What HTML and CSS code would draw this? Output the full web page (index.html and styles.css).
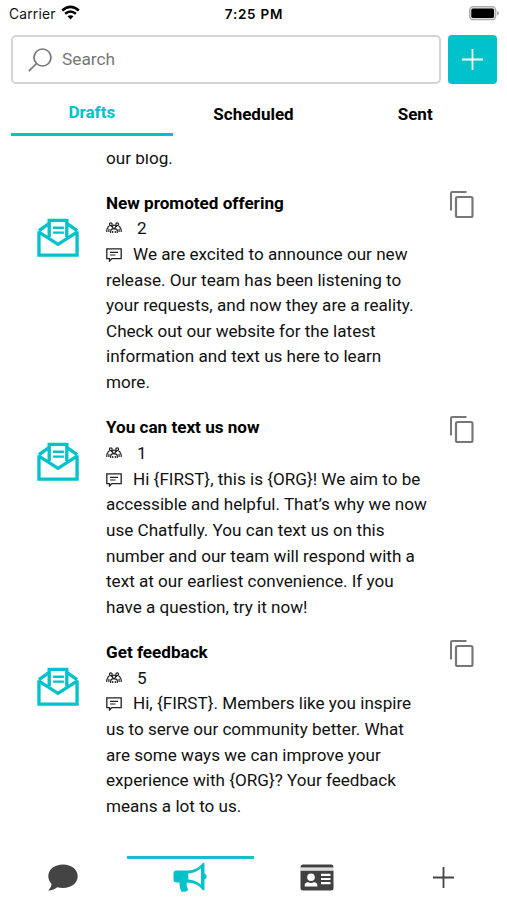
FILE: index.html
```
<!DOCTYPE html>
<html lang="en">
<head>
<meta charset="utf-8">
<title>Drafts</title>
<link rel="stylesheet" href="styles.css">
</head>
<body>
<svg class="defs" aria-hidden="true">
  <symbol id="mail" viewBox="0 0 44 40">
    <path d="M2 13v24.500h39V13M2 14l19.500 12.500L41 14M12.500 5 2 12.500M30.500 5 41 12.500M12.500 19V2h18v17" fill="none" stroke="currentColor" stroke-width="3.400"/>
    <path d="M16.500 9.500h11M16.500 14.500h11" stroke="currentColor" stroke-width="2.500"/>
  </symbol>
  <symbol id="people" viewBox="0 0 16 12">
    <g fill="none" stroke="currentColor" stroke-width="1.200">
      <circle cx="8" cy="4.800" r="1.600"/><circle cx="4.800" cy="2.200" r="1.400"/><circle cx="11.200" cy="2.200" r="1.400"/>
      <path d="M4.700 11V9q0-2.200 2-2.200h2.600q2 0 2 2.200v2M.8 10V8q0-1.400 1-1.800 0-2.200 1.800-2.200M15.200 10V8q0-1.400-1-1.800 0-2.200-1.800-2.200M2.900 7v3M13.100 7v3M6.700 11V9M9.300 11V9M5 4.200l1.200.6M11 4.200l-1.200.6"/>
    </g>
  </symbol>
  <symbol id="message" viewBox="0 0 16 14">
    <path d="M.8.800h14.400v9.800H6L3.500 13v-2.400H.8z" fill="none" stroke="currentColor" stroke-width="1.300"/>
    <path d="M4 4.400h8M4 7h5.500" stroke="currentColor" stroke-width="1.100"/>
  </symbol>
  <symbol id="copy" viewBox="0 0 24 28">
    <path d="M1 19.500V2.200Q1 1 2.200 1H16.500" fill="none" stroke="currentColor" stroke-width="2"/>
    <rect x="6" y="6" width="16.500" height="20" rx="1.500" fill="none" stroke="currentColor" stroke-width="2.200"/>
  </symbol>
</svg>

<div class="phone">
  <header class="status">
    <div class="carrier">Carrier
      <svg width="19" height="15" viewBox="0 0 19 15"><g fill="none" stroke="#000" stroke-width="2.500"><path d="M1.200 5.500q8.300-7.300 16.600 0"/><path d="M4.100 8.700q5.400-4.500 10.800 0"/></g><path d="M6.500 11.300q3-2.200 6 0l-3 3.100z"/></svg>
    </div>
    <div class="time">7:25 PM</div>
    <div class="battery">
      <svg width="31" height="15" viewBox="0 0 31 15"><rect x=".7" y=".7" width="26" height="13" rx="3.500" fill="#ddd" stroke="#aaa" stroke-width="1.300"/><rect x="2.300" y="2.400" width="22.700" height="9.600" rx="1.700"/><path d="M28 4.800q4 2.400 0 4.800z" fill="#aaa"/></svg>
    </div>
  </header>

  <div class="search-row">
    <div class="search">
      <svg width="24" height="24" viewBox="0 0 24 24" fill="none" stroke="#777" stroke-width="1.700"><circle cx="14.500" cy="9.500" r="8.500"/><path d="M8.500 15.500.8 23.200"/></svg>
      <span>Search</span>
    </div>
    <div class="add"><svg width="21" height="21" viewBox="0 0 21 21"><path d="M10.500 0v21M0 10.500h21" stroke="#fff" stroke-width="1.800"/></svg></div>
  </div>

  <nav class="tabs">
    <div class="tab active">Drafts</div>
    <div class="tab">Scheduled</div>
    <div class="tab">Sent</div>
  </nav>

  <main class="list">
    <article class="draft partial"><div class="body">our blog.</div></article>

    <article class="draft">
      <svg class="mail"><use href="#mail"/></svg>
      <div class="body">
        <h2>New promoted offering</h2>
        <div><svg class="people"><use href="#people"/></svg>2</div>
        <p><svg class="message"><use href="#message"/></svg>We are excited to announce our new<br>release. Our team has been listening to<br>your requests, and now they are a reality.<br>Check out our website for the latest<br>information and text us here to learn<br>more.</p>
      </div>
      <svg class="copy"><use href="#copy"/></svg>
    </article>

    <article class="draft">
      <svg class="mail"><use href="#mail"/></svg>
      <div class="body">
        <h2>You can text us now</h2>
        <div><svg class="people"><use href="#people"/></svg>1</div>
        <p><svg class="message"><use href="#message"/></svg>Hi {FIRST}, this is {ORG}! We aim to be<br>accessible and helpful. That’s why we now<br>use Chatfully. You can text us on this<br>number and our team will respond with a<br>text at our earliest convenience. If you<br>have a question, try it now!</p>
      </div>
      <svg class="copy"><use href="#copy"/></svg>
    </article>

    <article class="draft">
      <svg class="mail"><use href="#mail"/></svg>
      <div class="body">
        <h2>Get feedback</h2>
        <div><svg class="people"><use href="#people"/></svg>5</div>
        <p><svg class="message"><use href="#message"/></svg>Hi, {FIRST}. Members like you inspire<br>us to serve our community better. What<br>are some ways we can improve your<br>experience with {ORG}? Your feedback<br>means a lot to us.</p>
      </div>
      <svg class="copy"><use href="#copy"/></svg>
    </article>
  </main>

  <footer class="bottom">
    <div class="item"><svg width="30" height="27" viewBox="0 0 30 27"><path d="M15 .5C23.500.5 29.700 5.500 29.700 12.300S23.500 24 15 24q-3 0-5.800-.8Q6 26.300.3 26.500 3.400 23.500 3.600 20 .3 16.600.3 12.300C.3 5.500 6.500.500 15 .5z" fill="#444"/></svg></div>
    <div class="item active"><svg width="34" height="31" viewBox="0 0 34 31"><path d="M3.500 8.500H15C21 8.500 26 5.500 29.500 1.300q2-1.500 2 .7v9.500q2.200 1 2.200 3t-2.200 3v9.600q0 2.200-2 .7C26 23.500 21 20.500 14 20.500q-1 2.200.2 4.500.3 1.500 1 2.500-.8 2.300-3.500 2.300H8.500Q6.300 25.500 6.400 20.500H3.500Q.5 20.500.5 17.500v-6q0-3 3-3z" fill="#00c2cb"/><path d="M15.300 11.400Q22.500 11 28 6.300v16.400Q22.500 18 15.300 17.600z" fill="#fff"/></svg></div>
    <div class="item"><svg width="34" height="27" viewBox="0 0 34 27"><path d="M3 .5h28q2.500 0 2.500 3H.5q0-3 2.500-3zM.5 6.500h33V24q0 2.500-2.500 2.500H3Q.5 26.500.5 24z" fill="#404040"/><path d="M.5 4h33v2.500H.5z" fill="#ddd"/><circle cx="11" cy="13.300" r="3.800" fill="#fff"/><path d="M4.500 22.500q0-4.300 3.500-4.300 3 1.500 6 0 3.500 0 3.500 4.300zM21 9.700h9.500v2.200H21zM21 13.900h9.500v2.200H21zM21 18h9.500v2.200H21z" fill="#fff"/></svg></div>
    <div class="item"><svg width="21" height="21" viewBox="0 0 21 21"><path d="M10.500 0v21M0 10.500h21" stroke="#444" stroke-width="1.800"/></svg></div>
  </footer>
</div>
</body>
</html>
```

FILE: styles.css
```
* { box-sizing: border-box; }
body { margin: 0; background: #fff; color: #111; font-family: Roboto, sans-serif; }
svg { display: block; }
.defs { display: none; }
.phone { width: 507px; height: 900px; display: flex; flex-direction: column; overflow: hidden; }

.status { flex: none; height: 35px; padding: 5px 7px 0 9px; display: grid; grid-template-columns: 1fr auto 1fr; font: 500 13.500px/18px Inter, sans-serif; color: #111; }
.carrier { display: flex; gap: 5px; font-weight: 400; font-size: 13.800px; letter-spacing: .2px; }
.time { font-weight: 600; letter-spacing: .75px; margin-left: -1px; color: #000; }
.battery { justify-self: end; padding-top: 1px; }

.search-row { flex: none; display: flex; gap: 7px; padding: 0 10px 0 11px; height: 49px; }
.search { flex: 1; display: flex; align-items: center; gap: 10px; padding-left: 15px; border: 2px solid #d4d4d4; border-radius: 5px; font-size: 17.300px; color: #777; }
.search span { margin-top: -2px; }
.add { width: 49px; display: flex; align-items: center; justify-content: center; border-radius: 4px; background: #00c2cb; }

.tabs { flex: none; display: flex; margin: 8px 11px 0 11px; height: 44px; }
.tab { flex: 1; text-align: center; font-weight: 700; font-size: 17px; line-height: 44px; color: #000; }
.tab.active { line-height: 41px; color: #00c2cb; border-bottom: 3px solid #00c2cb; }

.list { height: 692px; margin-top: 18px; overflow: hidden; flex: none; }
.draft { display: flex; height: 205.300px; margin-bottom: 19.400px; padding-left: 37px; }
.draft.partial { height: 25.660px; margin-top: -8.500px; padding-left: 106px; }
.mail { flex: none; width: 43px; height: 40px; margin: 27px 26px 0 0; color: #00c2cb; }
.body { width: 344px; flex: none; font-size: 17.100px; line-height: 25.660px; white-space: nowrap; }
.body h2, .body p { margin: 0; font-size: inherit; }
.body h2 { font-weight: 700; color: #000; }
.people, .message { display: inline-block; width: 16px; color: #222; }
.people { height: 12px; margin-right: 15px; vertical-align: 0; }
.message { height: 14px; margin-right: 11px; vertical-align: -2px; }
.copy { flex: none; width: 24px; height: 28px; margin-top: .5px; color: #777; }

.bottom { flex: none; height: 45px; margin-top: 9.500px; display: flex; }
.item { flex: 1; display: flex; align-items: center; justify-content: center; height: 41px; border-top: 3px solid transparent; }
.item.active { border-color: #18bfc9; }
```
